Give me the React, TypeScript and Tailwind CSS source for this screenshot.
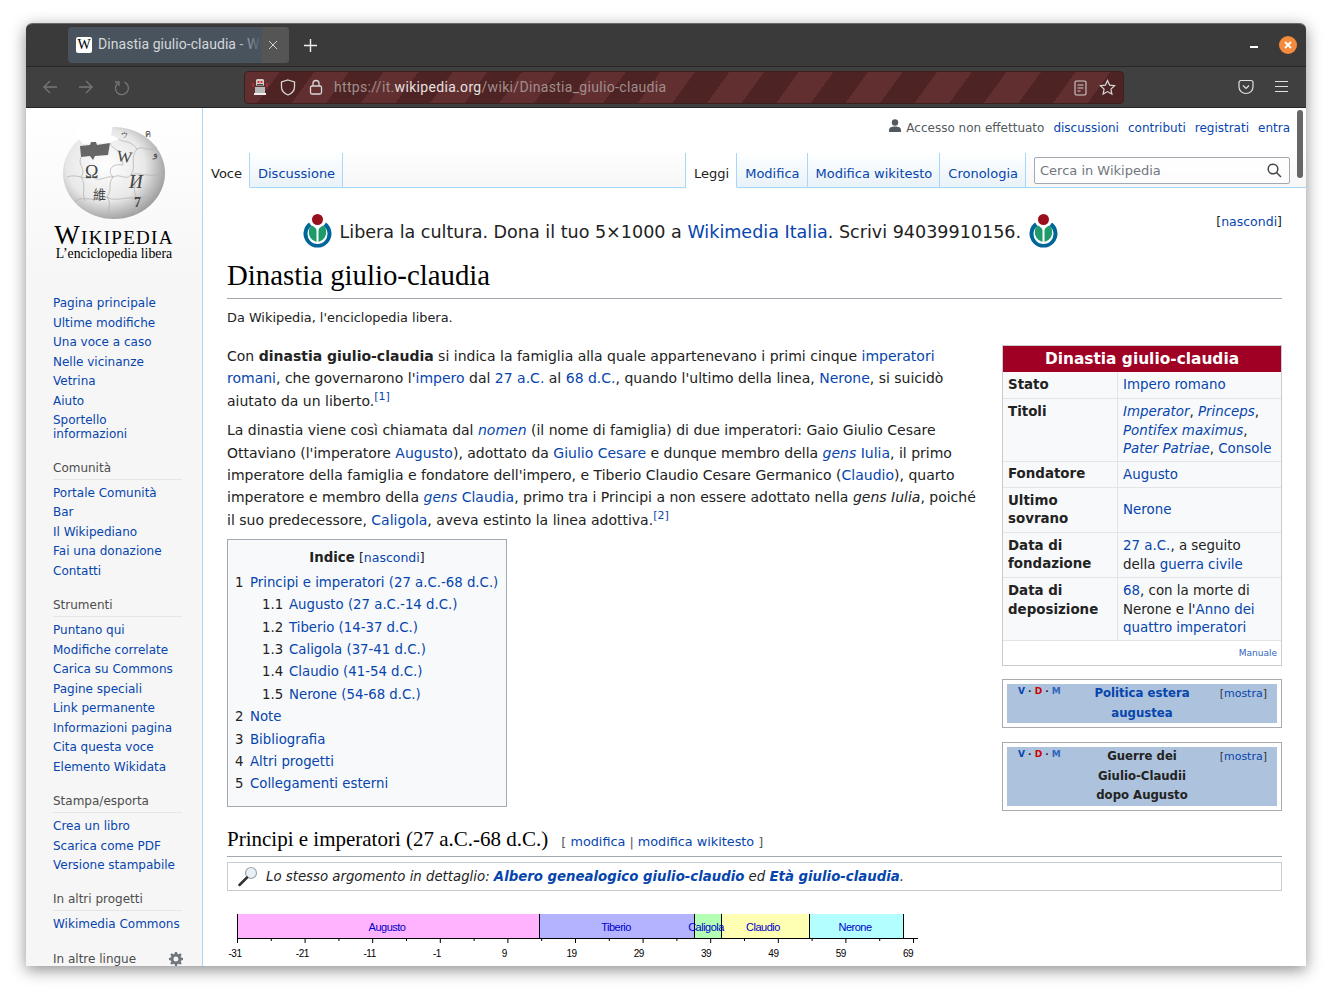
const link = "text-[#0645ad]";

const sideNav = [
  { title: "", gap: "mb-[13px]", items: ["Pagina principale", "Ultime modifiche", "Una voce a caso", "Nelle vicinanze", "Vetrina", "Aiuto", "Sportello informazioni"] },
  { title: "Comunità", gap: "mb-[14px]", items: ["Portale Comunità", "Bar", "Il Wikipediano", "Fai una donazione", "Contatti"] },
  { title: "Strumenti", gap: "mb-[14px]", items: ["Puntano qui", "Modifiche correlate", "Carica su Commons", "Pagine speciali", "Link permanente", "Informazioni pagina", "Cita questa voce", "Elemento Wikidata"] },
  { title: "Stampa/esporta", gap: "mb-[13px]", items: ["Crea un libro", "Scarica come PDF", "Versione stampabile"] },
  { title: "In altri progetti", gap: "mb-[14px]", items: ["Wikimedia Commons"] },
];

const toc = [
  { n: "1", t: "Principi e imperatori (27 a.C.-68 d.C.)", sub: false },
  { n: "1.1", t: "Augusto (27 a.C.-14 d.C.)", sub: true },
  { n: "1.2", t: "Tiberio (14-37 d.C.)", sub: true },
  { n: "1.3", t: "Caligola (37-41 d.C.)", sub: true },
  { n: "1.4", t: "Claudio (41-54 d.C.)", sub: true },
  { n: "1.5", t: "Nerone (54-68 d.C.)", sub: true },
  { n: "2", t: "Note", sub: false },
  { n: "3", t: "Bibliografia", sub: false },
  { n: "4", t: "Altri progetti", sub: false },
  { n: "5", t: "Collegamenti esterni", sub: false },
];

function A({ children }: { children: React.ReactNode }) {
  return <a className={link}>{children}</a>;
}

function Globe() {
  return (
    <svg width="104" height="96" viewBox="0 0 104 96" className="block">
      <defs>
        <radialGradient id="gl" cx="42%" cy="42%" r="62%">
          <stop offset="0%" stopColor="#ffffff" />
          <stop offset="62%" stopColor="#e8e8e8" />
          <stop offset="100%" stopColor="#9a9a9a" />
        </radialGradient>
      </defs>
      <ellipse cx="51" cy="48" rx="51" ry="46" fill="url(#gl)" />
      <path d="M10 0H50 L48 10 L56 14 L46 18 L20 19 L14 12Z" fill="#fff" />
      <path d="M17 21 L27 20 L28 17 L33 17 L34 20 L47 18 L45 30 L32 31 L30 35 L27 31 L18 32Z" fill="#666" />
      <g fill="none" stroke="#b5b5b5" strokeWidth="0.8">
        <path d="M47 18 C50 26 58 22 60 40 C48 38 44 46 50 52 C44 60 50 64 44 72 C50 80 42 86 48 93" />
        <path d="M56 14 C60 18 66 14 74 24 C66 34 74 40 68 50 C76 56 68 64 74 74 C70 80 76 84 72 90" />
        <path d="M4 52 C14 48 22 56 30 52 C36 58 44 50 50 52 C58 48 62 56 68 50 C76 46 86 54 100 48" />
        <path d="M12 76 C22 70 30 78 44 72 C52 78 64 70 74 74 C80 70 84 74 90 70" />
        <path d="M74 24 C80 20 86 28 94 22" />
        <path d="M18 32 C14 40 24 44 18 52 C24 60 18 68 22 76" />
      </g>
      <g fontFamily="'Liberation Serif', serif" fill="#444">
        <text x="22" y="53" fontSize="18">Ω</text>
        <text x="54" y="37" fontSize="16" transform="rotate(8 60 32)">W</text>
        <text x="66" y="63" fontSize="19" fontStyle="italic">И</text>
        <text x="30" y="74" fontSize="13" fontFamily="'Noto Sans CJK SC', serif">維</text>
        <text x="71" y="82" fontSize="14" fontWeight="700">7</text>
        <text x="90" y="32" fontSize="10">و</text>
        <text x="58" y="12" fontSize="7">ウ</text>
        <text x="82" y="12" fontSize="9">ค</text>
      </g>
    </svg>
  );
}

function WmLogo() {
  return (
    <svg width="33" height="35" viewBox="0 0 33 35" className="block shrink-0">
      <path d="M8 9.500 A14 14 0 1 0 25 9.500 L22.500 13 A10 10 0 1 1 10.500 13Z" fill="#006699" />
      <path d="M15.500 17 L15.500 29 A10 10 0 0 1 8 17 A9 9 0 0 1 10.500 12.500 C13 13.500 15 15 15.500 17Z" fill="#1f9b6b" />
      <path d="M17.500 17 L17.500 29 A10 10 0 0 0 25 17 A9 9 0 0 0 22.500 12.500 C20 13.500 18 15 17.500 17Z" fill="#1f9b6b" />
      <circle cx="16.500" cy="6.500" r="5.500" fill="#990f1c" />
    </svg>
  );
}

function TopBar() {
  return (
    <>
      <div className="h-[43px] bg-[#3a3a3a] border-b border-[#262626] flex items-start pl-[42px] relative">
        <div className="mt-[3px] w-[221px] h-[36px] rounded-[4px] bg-[#49535e] flex items-center pl-[8px] relative overflow-hidden">
          <span className="w-[16px] h-[16px] bg-white rounded-[2px] flex items-center justify-center text-[14px] leading-none text-black font-['Liberation_Serif',serif] shrink-0">W</span>
          <span className="-mt-[2px] ml-[6px] w-[180px] overflow-hidden whitespace-nowrap text-[14px] tracking-[0.05px] text-[#d4d7da] font-['Roboto',sans-serif]">Dinastia giulio-claudia - Wikipedia</span>
          <div className="absolute right-[27px] top-0 bottom-0 w-[26px] bg-gradient-to-r from-transparent to-[#49535e]" />
          <div className="absolute right-0 top-0 bottom-0 w-[27px] bg-[#555555]" />
          <svg className="absolute right-[11px] top-[13px]" width="10" height="10" viewBox="0 0 10 10" stroke="#d0d0d0" strokeWidth="1"><path d="M1 1l8 8M9 1l-8 8" /></svg>
        </div>
        <svg className="ml-[15px] mt-[15px]" width="13" height="13" viewBox="0 0 13 13" stroke="#f0f0f0" strokeWidth="1.400"><path d="M6.500 0v13M0 6.500h13" /></svg>
        <div className="absolute right-[48px] top-[22px] w-[8px] h-[2px] bg-white" />
        <div className="absolute right-[9px] top-[12px] w-[18px] h-[18px] rounded-full bg-[#f58a3c] flex items-center justify-center">
          <svg width="8" height="8" viewBox="0 0 8 8" stroke="#fff" strokeWidth="1.800"><path d="M1 1l6 6M7 1l-6 6" /></svg>
        </div>
      </div>
      <div className="h-[41px] bg-[#404040] border-b border-[#262626] flex items-center relative">
        <svg className="ml-[16px]" width="16" height="16" viewBox="0 0 16 16" fill="none" stroke="#777" strokeWidth="1.300"><path d="M15 8H2M8 2L2 8l6 6" /></svg>
        <svg className="ml-[20px]" width="16" height="16" viewBox="0 0 16 16" fill="none" stroke="#777" strokeWidth="1.300"><path d="M1 8h13M8 2l6 6-6 6" /></svg>
        <svg className="ml-[19px]" width="17" height="17" viewBox="0 0 17 17" fill="none" stroke="#777" strokeWidth="1.300"><path d="M11.500 3.200A6.500 6.500 0 1 1 5 4" /><path d="M2 3h4v4" /></svg>
        <div className="ml-[114px] w-[880px] h-[33px] rounded-[4px] border border-[#3c2020] bg-[repeating-linear-gradient(126deg,#622f30_0,#622f30_28px,#4e2323_28px,#4e2323_56px)] flex items-center relative">
          <svg className="ml-[7px]" width="16" height="18" viewBox="0 0 16 18">
            <rect x="4" y="1" width="8" height="7" rx="1.500" fill="#cfcfcf" />
            <rect x="5.500" y="3" width="2" height="2" fill="#e33" />
            <rect x="8.500" y="3" width="2" height="2" fill="#e33" />
            <rect x="5" y="6" width="6" height="1.500" fill="#444" />
            <rect x="3" y="9" width="10" height="6" fill="#b8b8b8" />
            <rect x="2" y="15" width="12" height="2" fill="#eee" />
            <path d="M1 5v4M15 5v4" stroke="#d33" strokeWidth="1" />
          </svg>
          <svg className="ml-[12px]" width="16" height="17" viewBox="0 0 16 17" fill="none" stroke="#d8d8d8" strokeWidth="1.300"><path d="M8 1l6.500 2v5c0 4-3 6.500-6.500 8-3.500-1.500-6.500-4-6.500-8V3z" /></svg>
          <svg className="ml-[13px]" width="14" height="16" viewBox="0 0 14 16" fill="none" stroke="#d8d8d8" strokeWidth="1.300"><rect x="1.500" y="7" width="11" height="8" rx="1.500" /><path d="M4 7V4.500a3 3 0 0 1 6 0V7" /></svg>
          <span className="ml-[11px] text-[14px] tracking-[0.32px] text-[#a08e8e] font-['Roboto',sans-serif] whitespace-nowrap">https://it.<span className="text-[#e6e0e0]">wikipedia.org</span>/wiki/Dinastia_giulio-claudia</span>
          <svg className="absolute right-[36px] top-[8px]" width="13" height="16" viewBox="0 0 13 16" fill="none" stroke="#cfcfcf" strokeWidth="1.100"><rect x="1" y="1" width="11" height="14" rx="1.500" /><path d="M3.500 5h6M3.500 8h6M3.500 11h3" /></svg>
          <svg className="absolute right-[7px] top-[7px]" width="17" height="17" viewBox="0 0 17 17" fill="none" stroke="#d8d8d8" strokeWidth="1.200"><path d="M8.500 1.500l2.100 4.600 5 .6-3.700 3.400 1 5-4.400-2.500-4.400 2.500 1-5L1.400 6.700l5-.6z" /></svg>
        </div>
        <svg className="absolute right-[52px] top-[12px]" width="16" height="16" viewBox="0 0 16 16" fill="none" stroke="#e0e0e0" strokeWidth="1.200"><path d="M1 3.500a2 2 0 0 1 2-2h10a2 2 0 0 1 2 2V8a7 6.500 0 0 1-14 0z" /><path d="M5 6.500l3 3 3-3" /></svg>
        <svg className="absolute right-[18px] top-[13px]" width="13" height="13" viewBox="0 0 13 13" stroke="#e0e0e0" strokeWidth="1.200"><path d="M0 1.500h13M0 6.500h13M0 11.500h13" /></svg>
      </div>
    </>
  );
}

function Sidebar() {
  return (
    <aside className="w-[177px] shrink-0 bg-[#f6f6f6] bg-gradient-to-b from-white to-[#f6f6f6] bg-[length:100%_170px] bg-no-repeat border-r border-[#a7d7f9] h-full overflow-hidden">
      <div className="pt-[17px] pl-[37px]"><Globe /></div>
      <div className="mt-[1px] text-center w-[176px] font-['Liberation_Serif',serif] text-black">
        <div className="text-[27px] leading-[26px] whitespace-nowrap [font-variant:small-caps] tracking-[1.300px]">Wikipedia</div>
        <div className="text-[13.800px] leading-[15px] -mt-[2px]">L’enciclopedia libera</div>
      </div>
      <nav className="mt-[35px] pl-[27px] pr-[10px] font-['DejaVu_Sans',sans-serif] text-[12px]">
        {sideNav.map((s) => (
          <div key={s.items[0]} className={s.gap}>
            {s.title && (
              <div className="h-[20px] leading-[17px] text-[#4d4d4d] border-b border-[#e6e6e6] mb-[6px] mr-[10px]">{s.title}</div>
            )}
            {s.items.map((i) => (
              <div key={i} className={`${link} w-[130px] leading-[14px] pb-[5.500px]`}>{i}</div>
            ))}
          </div>
        ))}
        <div className="relative mt-[15px] h-[20px] leading-[17px] text-[#4d4d4d] mr-[10px]">
          In altre lingue
          <svg className="absolute right-[-1px] top-[1px]" width="14" height="14" viewBox="0 0 14 14" fill="#72777d"><path fillRule="evenodd" d="M6 0h2l.4 1.800 1.300.5L11.300 1.300l1.400 1.400-1 1.600.5 1.300L14 6v2l-1.800.4-.5 1.300 1 1.600-1.400 1.400-1.600-1-1.300.5L8 14H6l-.4-1.800-1.300-.5-1.600 1-1.400-1.400 1-1.600-.5-1.300L0 8V6l1.800-.4.5-1.300-1-1.600 1.400-1.400 1.600 1 1.300-.5zM7 4.500a2.500 2.500 0 1 0 0 5 2.500 2.500 0 0 0 0-5z" /></svg>
        </div>
      </nav>
    </aside>
  );
}

function Tab({ label, active }: { label: string; active?: boolean }) {
  return (
    <div
      className={`h-[35px] pt-[13px] pl-[8px] pr-[7px] text-[13px] leading-[16px] whitespace-nowrap border-r border-[#a7d7f9] ${
        active ? "bg-white text-[#222] border-b border-b-white" : `bg-gradient-to-b from-white to-[#e8f2f8] ${link} border-b border-b-[#a7d7f9]`
      }`}
    >
      {label}
    </div>
  );
}

function Header() {
  return (
    <div className="h-[80px] bg-gradient-to-b from-white from-50% to-[#f6f6f6] relative">
      <div className="absolute right-[16px] top-[13px] flex items-center gap-[9px] text-[12px] leading-[14px] whitespace-nowrap">
        <span className="text-[#54595d] flex items-center gap-[5px]">
          <svg className="-mt-[4px]" width="12" height="14" viewBox="0 0 12 14" fill="#54595d"><circle cx="6" cy="3.500" r="3.200" /><path d="M0 13v-2c0-2.500 2.500-3.500 6-3.500s6 1 6 3.500v2z" /></svg>
          Accesso non effettuato
        </span>
        <A>discussioni</A>
        <A>contributi</A>
        <A>registrati</A>
        <A>entra</A>
      </div>
      <div className="absolute left-0 right-0 bottom-0 h-[1px] bg-[#a7d7f9]" />
      <div className="absolute left-0 right-0 bottom-0 flex items-end">
        <Tab label="Voce" active />
        <Tab label="Discussione" />
        <div className="flex-1" />
        <div className="border-l border-[#a7d7f9] flex">
          <Tab label="Leggi" active />
          <Tab label="Modifica" />
          <Tab label="Modifica wikitesto" />
          <Tab label="Cronologia" />
        </div>
        <div className="w-[280px] shrink-0 h-[35px] pl-[8px] pr-[16px] relative">
          <div className="h-[27px] mt-[4px] bg-white/70 border border-[#a2a9b1] rounded-[2px] text-[13px] leading-[25px] pl-[5px] text-[#72777d] relative">
            Cerca in Wikipedia
            <svg className="absolute right-[7px] top-[5px]" width="15" height="15" viewBox="0 0 15 15" fill="none" stroke="#444" strokeWidth="1.500"><circle cx="6" cy="6" r="4.800" /><path d="M9.500 9.500L14 14" /></svg>
          </div>
        </div>
      </div>
    </div>
  );
}

function Infobox() {
  const label = "w-[115px] shrink-0 px-[5px] font-bold border-r border-[#e4e4e4] flex items-center";
  const value = "flex-1 px-[5px] py-[4px]";
  return (
    <div className="border border-[#c8ccd1] bg-white text-[13.400px] leading-[18.500px] text-[#222]">
      <div className="h-[26px] bg-[#a00024] text-white font-bold text-center text-[15.400px] leading-[26px]">Dinastia giulio-claudia</div>
      <div className="flex h-[27px] bg-[#f8f9fa] border-b border-[#e4e4e4]">
        <div className={label}>Stato</div>
        <div className={value}><A>Impero romano</A></div>
      </div>
      <div className="flex h-[63px] bg-[#f8f9fa] border-b border-[#e4e4e4]">
        <div className={`${label} !items-start pt-[4px]`}>Titoli</div>
        <div className={value}>
          <i><A>Imperator</A></i>, <i><A>Princeps</A></i>, <i><A>Pontifex maximus</A></i>, <i><A>Pater Patriae</A></i>, <A>Console</A>
        </div>
      </div>
      <div className="flex h-[26px] bg-[#f8f9fa] border-b border-[#e4e4e4]">
        <div className={label}>Fondatore</div>
        <div className={value}><A>Augusto</A></div>
      </div>
      <div className="flex h-[45px] bg-[#f8f9fa] border-b border-[#e4e4e4]">
        <div className={label}>Ultimo sovrano</div>
        <div className={`${value} flex items-center`}><A>Nerone</A></div>
      </div>
      <div className="flex h-[45px] bg-[#f8f9fa] border-b border-[#e4e4e4]">
        <div className={label}>Data di fondazione</div>
        <div className={value}><A>27 a.C.</A>, a seguito della <A>guerra civile</A></div>
      </div>
      <div className="flex h-[63px] bg-[#f8f9fa] border-b border-[#e4e4e4]">
        <div className={`${label} !items-start pt-[4px]`}>Data di deposizione</div>
        <div className={value}><A>68</A>, con la morte di Nerone e l'<A>Anno dei quattro imperatori</A></div>
      </div>
      <div className="h-[24px] text-right pr-[4px] text-[9px] leading-[24px] text-[#3366bb]">Manuale</div>
    </div>
  );
}

function Navbox({ lines, linked }: { lines: string[]; linked?: boolean }) {
  return (
    <div className="border border-[#aaaaaa] p-[4px] bg-white">
      <div className="bg-[#adc2dc] relative text-center text-[11.700px] leading-[19.500px] font-bold text-[#222] px-[80px] py-0">
        <div className="absolute left-[11px] top-[0px] text-[9px] leading-[15px] font-bold whitespace-nowrap">
          <span className="text-[#0645ad]">V</span> · <span className="text-[#cc0000]">D</span> · <span className="text-[#3366bb]">M</span>
        </div>
        <div className="absolute right-[10px] top-[0px] text-[11px] leading-[19px] font-normal text-[#333] whitespace-nowrap">
          [<span className="text-[#0645ad]">mostra</span>]
        </div>
        {lines.map((l) => (
          <div key={l} className={linked ? "text-[#0645ad]" : ""}>{l}</div>
        ))}
      </div>
    </div>
  );
}

function Timeline() {
  const bars = [
    { x: 237, w: 302, c: "#ffb3ff", t: "Augusto", tx: 387 },
    { x: 539, w: 155, c: "#b3b3ff", t: "Tiberio", tx: 616 },
    { x: 694, w: 27, c: "#b3ffb3", t: "", tx: 0 },
    { x: 721, w: 88, c: "#ffffb3", t: "Claudio", tx: 763 },
    { x: 809, w: 94, c: "#b3ffff", t: "Nerone", tx: 855 },
  ];
  const years = ["-31", "-21", "-11", "-1", "9", "19", "29", "39", "49", "59", "69"];
  const ox = 227;
  return (
    <svg width="700" height="60" viewBox="0 0 700 60" className="block mt-[21px]" fontFamily="'Liberation Sans', sans-serif">
      {bars.map((b) => (
        <g key={b.x}>
          <rect x={b.x - ox} y="2" width={b.w} height="24" fill={b.c} />
          <path d={`M${b.x - ox + 0.5} 2v24`} stroke="#000" />
          {b.t && <text x={b.tx - ox} y="18.500" fontSize="11" fill="#0000cc" textAnchor="middle" letterSpacing="-0.5">{b.t}</text>}
        </g>
      ))}
      <path d={`M${903 - ox + 0.5} 2v24`} stroke="#000" />
      <text x={706 - ox} y="18.500" fontSize="11" fill="#0000cc" textAnchor="middle" letterSpacing="-0.5">Caligola</text>
      <path d={`M${237 - ox} 26.500H${918 - ox}`} stroke="#000" />
      {Array.from({ length: 21 }).map((_, i) => {
        const x = 237 - ox + i * 33.800 + 0.5;
        return <path key={i} d={`M${x} 26v${i % 2 === 0 ? 5 : 3}`} stroke="#000" />;
      })}
      {years.map((y, i) => (
        <text key={y} x={235 + i * 67.300 - ox} y="45" fontSize="10" fill="#000" textAnchor="middle" letterSpacing="-0.5">{y}</text>
      ))}
    </svg>
  );
}

export default function App() {
  return (
    <div className="w-[1332px] h-[995px] bg-white overflow-hidden pt-[23px] pl-[26px] font-['DejaVu_Sans',sans-serif]">
      <div className="w-[1280px] h-[943px] rounded-t-[6px] overflow-hidden flex flex-col relative border-t border-[#6a6a6a] shadow-[0_4px_16px_rgba(0,0,0,0.45)]">
        <TopBar />
        <div className="flex flex-1 min-h-0 bg-white">
          <Sidebar />
          <main className="flex-1 min-w-0 overflow-hidden">
            <Header />
            <div className="px-[24px] text-[#222]">
              <div className="h-[62px] relative flex items-start justify-start pl-[74px] pt-[25px] text-[17.560px] leading-[34px] gap-[5.500px] whitespace-nowrap">
                <WmLogo />
                <span className="mt-[2px]">Libera la cultura. Dona il tuo 5×1000 a <A>Wikimedia Italia</A>. Scrivi 94039910156.</span>
                <WmLogo />
                <div className="absolute right-0 top-[25px] text-[12.500px] leading-[18px]">[<A>nascondi</A>]</div>
              </div>
              <h1 className="font-['Liberation_Serif',serif] text-[28.800px] leading-[36px] h-[49px] pt-[7px] border-b border-[#a2a9b1] text-black">Dinastia giulio-claudia</h1>
              <div className="text-[12.880px] leading-[18px] mt-[10px]">Da Wikipedia, l'enciclopedia libera.</div>
              <div className="flex justify-between mt-[16px]">
                <div className="w-[752px] text-[14px] leading-[22.400px]">
                  <p className="mt-[2px]">
                    Con <b>dinastia giulio-claudia</b> si indica la famiglia alla quale appartenevano i primi cinque <A>imperatori romani</A>, che governarono l'<A>impero</A> dal <A>27 a.C.</A> al <A>68 d.C.</A>, quando l'ultimo della linea, <A>Nerone</A>, si suicidò aiutato da un liberto.<sup className="text-[11px] leading-none"><A>[1]</A></sup>
                  </p>
                  <p className="mt-[7px]">
                    La dinastia viene così chiamata dal <i><A>nomen</A></i> (il nome di famiglia) di due imperatori: Gaio Giulio Cesare Ottaviano (l'imperatore <A>Augusto</A>), adottato da <A>Giulio Cesare</A> e dunque membro della <i><A>gens</A></i> <A>Iulia</A>, il primo imperatore della famiglia e fondatore dell'impero, e Tiberio Claudio Cesare Germanico (<A>Claudio</A>), quarto imperatore e membro della <i><A>gens</A></i> <A>Claudia</A>, primo tra i Principi a non essere adottato nella <i>gens Iulia</i>, poiché il suo predecessore, <A>Caligola</A>, aveva estinto la linea adottiva.<sup className="text-[11px] leading-none"><A>[2]</A></sup>
                  </p>
                  <div className="mt-[8px] w-[280px] h-[268px] bg-[#f8f9fa] border border-[#a2a9b1] pt-[7px] px-[7px] text-[13.300px]">
                    <div className="text-center leading-[22px] mb-[2.500px]"><b>Indice</b> <span className="text-[12.500px]">[<A>nascondi</A>]</span></div>
                    {toc.map((t) => (
                      <div key={t.n} className={`flex whitespace-nowrap ${t.sub ? "pl-[27px]" : ""}`}>
                        <span className={`${t.sub ? "w-[27px]" : "w-[15px]"} shrink-0`}>{t.n}</span>
                        <A>{t.t}</A>
                      </div>
                    ))}
                  </div>
                </div>
                <div className="w-[280px] shrink-0 flex flex-col">
                  <div className="mt-[2px]"><Infobox /></div>
                  <div className="mt-[13px]"><Navbox lines={["Politica estera", "augustea"]} linked /></div>
                  <div className="mt-[14px]"><Navbox lines={["Guerre dei", "Giulio-Claudii", "dopo Augusto"]} /></div>
                </div>
              </div>
              <div className="mt-[15px] h-[31px] border-b border-[#a2a9b1] flex items-baseline whitespace-nowrap">
                <h2 className="font-['Liberation_Serif',serif] text-[21px] leading-[26px] text-black">Principi e imperatori (27 a.C.-68 d.C.)</h2>
                <span className="ml-[13px] text-[12.800px] text-[#54595d]">[ <A>modifica</A> | <A>modifica wikitesto</A> ]</span>
              </div>
              <div className="mt-[5px] h-[29px] border border-[#c8ccd1] flex items-center pl-[10px] pt-[1px] text-[13.300px] italic whitespace-nowrap">
                <svg className="shrink-0" width="20" height="21" viewBox="0 0 20 21" fill="none">
                  <circle cx="13" cy="7" r="5.500" fill="#e8f0f6" stroke="#9aa5ad" strokeWidth="1.200" />
                  <path d="M9 11.500L1.500 19" stroke="#333" strokeWidth="2.500" strokeLinecap="round" />
                </svg>
                <span className="ml-[8px]">Lo stesso argomento in dettaglio: <b><A>Albero genealogico giulio-claudio</A></b> ed <b><A>Età giulio-claudia</A></b>.</span>
              </div>
              <Timeline />
            </div>
          </main>
        </div>
        <div className="absolute right-[3px] top-[86px] w-[6px] h-[68px] rounded-full bg-[#666666]" />
      </div>
    </div>
  );
}
